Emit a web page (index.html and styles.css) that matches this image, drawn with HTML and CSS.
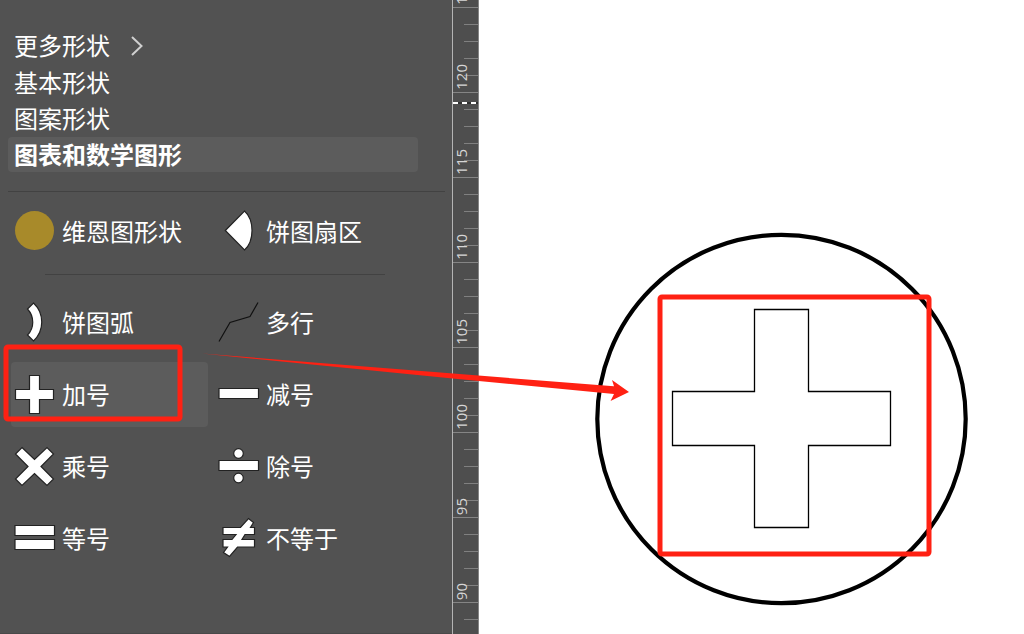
FILE: index.html
```html
<!DOCTYPE html>
<html lang="zh-CN">
<head>
<meta charset="utf-8">
<meta name="viewport" content="width=device-width, initial-scale=1">
<title>图表和数学图形</title>
<link rel="stylesheet" href="styles.css">
</head>
<body>
<div class="app">
  <aside class="panel">
    <nav class="categories">
      <button class="category category-more" type="button">更多形状
        <svg class="chevron" viewBox="0 0 14 20" aria-hidden="true"><path d="M2 1l9.500 9L2 19"/></svg>
      </button>
      <button class="category" type="button">基本形状</button>
      <button class="category" type="button">图案形状</button>
      <button class="category category-active" type="button">图表和数学图形</button>
    </nav>
    <hr class="rule">
    <div class="shapes">
      <button class="shape" type="button">
        <svg class="icon" viewBox="0 0 40 40" aria-hidden="true"><circle class="venn" cx="20.500" cy="18.500" r="19.500"/></svg>维恩图形状</button>
      <button class="shape" type="button">
        <svg class="icon" viewBox="0 0 40 40" aria-hidden="true"><path d="M7.300 18.500L26.500 -1C36.500 8 36.500 29 26.500 38z"/></svg>饼图扇区</button>
    </div>
    <hr class="rule rule-inset">
    <div class="shapes">
      <button class="shape" type="button">
        <svg class="icon" viewBox="0 0 40 40" aria-hidden="true"><path d="M13.500 6L19.500 0C30.500 10.500 30.500 27.500 19.500 38L13.500 32C20.500 25 20.500 13.500 13.500 6z"/></svg>饼图弧</button>
      <button class="shape" type="button">
        <svg class="icon" viewBox="0 0 40 40" aria-hidden="true"><path class="line" d="M1 38.500L12 19.500L32 13.500L40 -.5"/></svg>多行</button>
      <button class="shape shape-active" type="button">
        <svg class="icon" viewBox="0 0 40 40" aria-hidden="true"><path d="M15.500 .5h10v14h14v10h-14v14h-10v-14h-14v-10h14z"/></svg>加号</button>
      <button class="shape" type="button">
        <svg class="icon" viewBox="0 0 40 40" aria-hidden="true"><path d="M1 13.500h39.500v10h-39.500z"/></svg>减号</button>
      <button class="shape" type="button">
        <svg class="icon" viewBox="0 0 40 40" aria-hidden="true"><path d="M8 .5L20.500 12.500L33 .5L39.500 7L27 19.500L39.500 32L33 38.500L20.500 26.500L8 38.500L1.500 32L14 19.500L1.500 7z"/></svg>乘号</button>
      <button class="shape" type="button">
        <svg class="icon" viewBox="0 0 40 40" aria-hidden="true"><path d="M1 13.500h39.500v10h-39.500z"/><circle cx="20.500" cy="6.500" r="4.800"/><circle cx="20.500" cy="31" r="4.800"/></svg>除号</button>
      <button class="shape" type="button">
        <svg class="icon" viewBox="0 0 40 40" aria-hidden="true"><path d="M1 6.500h39.500v10h-39.500zM1 20.500h39.500v10h-39.500z"/></svg>等号</button>
      <button class="shape" type="button">
        <svg class="icon" viewBox="0 0 40 40" aria-hidden="true"><path d="M5 8.500h17.500L30.500 -.5L35.500 3.500L32.500 8.500H36.500V15.500H27L24 20.500H36.500V28H19.500L11.500 37.500L5.500 33.500L9.500 28H5V20.500H14L18 15.500H5z"/></svg>不等于</button>
    </div>
  </aside>
  <div class="ruler">
    <div class="segment segment-first"><span class="mark">125</span></div>
    <div class="segment"><span class="mark">120</span></div>
    <div class="segment"><span class="mark">115</span></div>
    <div class="segment"><span class="mark">110</span></div>
    <div class="segment"><span class="mark">105</span></div>
    <div class="segment"><span class="mark">100</span></div>
    <div class="segment"><span class="mark">95</span></div>
    <div class="segment"><span class="mark">90</span></div>
    <div class="segment"></div>
    <div class="cursor"></div>
  </div>
  <main class="canvas">
    <svg class="artwork" width="545" height="634" viewBox="479 0 545 634" role="img" aria-label="圆形中的加号">
      <circle class="ring" cx="781.500" cy="419" r="184.200"/>
      <path class="plus" d="M754.500 309.500h54v82h82v54h-82v82h-54v-82h-82v-54h82z"/>
    </svg>
  </main>
  <svg class="annotations" width="1024" height="634" viewBox="0 0 1024 634" aria-hidden="true">
    <rect x="6" y="347" width="174" height="72" rx="2"/>
    <rect x="660" y="297" width="269" height="257" rx="2"/>
    <path d="M202 353.500L450 373.300L614 386.300L612 380L629 392L610.500 401L614 394L450 378.300z"/>
  </svg>
</div>
</body>
</html>
```
FILE: styles.css
```css
* {
  box-sizing: border-box;
}

body {
  margin: 0;
  background: #fff;
  font-family: "Noto Sans CJK SC", sans-serif;
}

.app {
  position: relative;
  display: flex;
  height: 100vh;
  overflow: hidden;
}

.panel {
  flex: 0 0 452px;
  padding: 28px 7px 0 8px;
  background: #525252;
  border-bottom: 1px solid #494949;
  color: #fff;
}

.categories {
  display: flex;
  flex-direction: column;
  padding-right: 27px;
}

.category,
.shape {
  display: flex;
  align-items: center;
  border: 0;
  border-radius: 4px;
  background: none;
  color: inherit;
  font: 24px/34px "Noto Sans CJK SC", sans-serif;
  text-align: left;
  white-space: nowrap;
}

.category {
  height: 36px;
  padding: 0 6px 2px;
}

.category-more {
  gap: 20px;
  margin-bottom: 1px;
}

.category-active {
  height: 35px;
  padding-bottom: 1px;
  background: #5c5c5c;
  font-weight: 700;
}

.chevron {
  width: 14px;
  height: 20px;
  margin-top: 2px;
  fill: none;
  stroke: #d0d0d0;
  stroke-width: 2;
}

.rule {
  height: 1px;
  margin: 19px 0 7px;
  border: 0;
  background: #424242;
}

.rule-inset {
  margin: 10px 60px 15px 37px;
}

.shapes {
  display: grid;
  grid-template-columns: repeat(2, 197px);
  gap: 7px;
  padding-left: 3px;
}

.shape {
  gap: 8px;
  height: 65px;
  padding: 0 3px 2px;
}

.shape-active {
  background: #5c5c5c;
}

.icon {
  width: 40px;
  height: 40px;
  margin-top: 2px;
  overflow: visible;
  fill: #fff;
  stroke: #222;
  stroke-width: 1.2;
}

.icon .venn {
  fill: #a88a2a;
  stroke: none;
}

.icon .line {
  fill: none;
  stroke: #111;
}

.ruler {
  position: relative;
  flex: 0 0 27px;
  overflow: hidden;
  border-left: 1px solid #b4b4b4;
  border-right: 1px solid #858585;
  background: #4e4e4e;
}

.segment {
  display: flex;
  align-items: flex-end;
  height: 85px;
  padding-bottom: 3px;
  background:
    linear-gradient(#858585, #858585) bottom / 100% 1px no-repeat,
    repeating-linear-gradient(to top, #808080 0 1px, transparent 1px 17px) right / 14px 100% no-repeat;
}

.segment-first {
  height: 8px;
}

.mark {
  color: #d6d6d6;
  font: 15px/16px "Open Sans", sans-serif;
  writing-mode: vertical-rl;
  transform: rotate(180deg);
}

.cursor {
  position: absolute;
  top: 102px;
  left: 0;
  width: 100%;
  height: 2px;
  background: repeating-linear-gradient(to right, #fff 0 5px, #333 5px 9px);
}

.canvas {
  flex: 1;
  min-width: 0;
  overflow: hidden;
  background: #fff;
}

.artwork {
  display: block;
}

.ring {
  fill: none;
  stroke: #000;
  stroke-width: 4.2;
}

.plus {
  fill: #fff;
  stroke: #000;
  stroke-width: 1.3;
}

.annotations {
  position: absolute;
  top: 0;
  left: 0;
  pointer-events: none;
}

.annotations rect {
  fill: none;
  stroke: #ff2113;
  stroke-width: 5;
}

.annotations path {
  fill: #ff2113;
}
```
